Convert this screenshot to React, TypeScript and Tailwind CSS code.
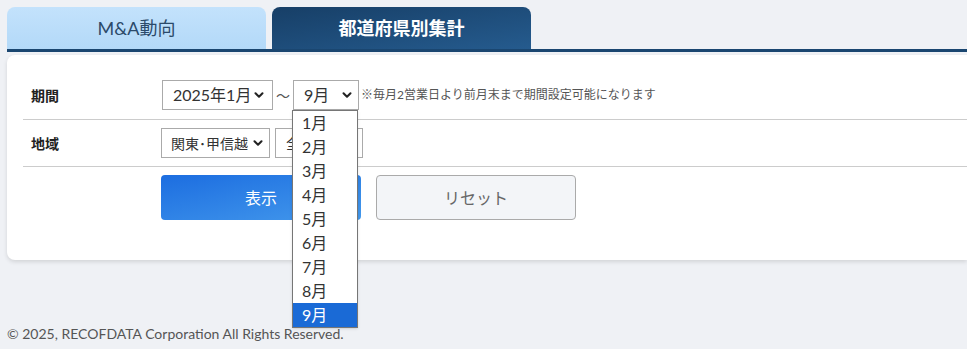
import { ChevronDown } from "lucide-react";

const months = ["1月", "2月", "3月", "4月", "5月", "6月", "7月", "8月", "9月"];

function Select({ label, className }: { label: string; className: string }) {
  return (
    <div
      className={`flex items-center justify-between whitespace-nowrap border border-[#aaaaaa] bg-white text-[#333] ${className}`}
    >
      <span>{label}</span>
      <ChevronDown size={14} strokeWidth={3.5} className="shrink-0 text-[#222]" />
    </div>
  );
}

export default function App() {
  return (
    <div
      className="relative w-[967px] h-[349px] overflow-hidden bg-[#eff1f5] text-[#333]"
      style={{ fontFamily: 'Lato, "Noto Sans CJK JP", sans-serif' }}
    >
      <div className="pl-[7px] pt-[7px]">
        <div className="flex gap-[6px] h-[42px]">
          <div className="w-[259px] rounded-t-[8px] bg-gradient-to-b from-[#c3e2fc] to-[#b3d9f8] flex items-center justify-center text-[18px] text-[#2b4a6a]">
            M&amp;A動向
          </div>
          <div className="w-[259px] rounded-t-[8px] bg-gradient-to-br from-[#173f67] to-[#255b8e] flex items-center justify-center text-[18px] text-white font-bold">
            都道府県別集計
          </div>
        </div>
        <div className="h-[3px] bg-[#1a4670]" />
        <div className="mt-[3px] h-[205px] rounded-l-[8px] bg-white shadow-[0_2px_4px_rgba(0,0,0,0.12)] pl-4 pt-[25px]">
          <div className="flex items-start h-[40px] border-b border-[#cccccc] pl-2">
            <div className="w-[131px] h-[30px] flex items-center text-[14px] font-bold text-[#222]">期間</div>
            <Select label="2025年1月" className="w-[111px] h-[30px] pl-[10px] pr-[6px] text-[16px]" />
            <span className="w-[20px] h-[30px] flex items-center justify-center text-[14px] text-[#555]">～</span>
            <Select label="9月" className="w-[66px] h-[30px] pl-[10px] pr-[4px] text-[16px]" />
            <span className="ml-[2px] h-[30px] flex items-center text-[12px] text-[#555]">
              ※毎月2営業日より前月末まで期間設定可能になります
            </span>
          </div>
          <div className="flex items-center h-[47px] border-b border-[#cccccc] pl-2">
            <div className="w-[130px] text-[14px] font-bold text-[#222]">地域</div>
            <Select label="関東･甲信越" className="w-[109px] h-[30px] pl-[9px] pr-[4px] text-[14px]" />
            <Select label="全" className="ml-[5px] w-[88px] h-[30px] pl-[10px] pr-[4px] text-[15px]" />
          </div>
          <div className="flex gap-[15px] pl-[138px] pt-[8px]">
            <button className="w-[200px] h-[45px] rounded-[4px] bg-gradient-to-br from-[#1c6de0] to-[#4499ec] text-white text-[16px]">
              表示
            </button>
            <button className="w-[200px] h-[45px] rounded-[4px] border border-[#aaaaaa] bg-[#f3f5f8] text-[#666] text-[16px]">
              リセット
            </button>
          </div>
        </div>
        <div className="mt-[63px] text-[14px] text-[#555]">© 2025, RECOFDATA Corporation All Rights Reserved.</div>
      </div>

      <ul className="absolute left-[292px] top-[110px] w-[66px] border border-[#767676] bg-white text-[16px] text-[#333] shadow-sm">
        {months.map((m, i) => (
          <li
            key={m}
            className={`h-[24px] leading-[24px] pl-[9px] ${i === months.length - 1 ? "bg-[#1a6ad6] text-white" : ""}`}
          >
            {m}
          </li>
        ))}
      </ul>
    </div>
  );
}
